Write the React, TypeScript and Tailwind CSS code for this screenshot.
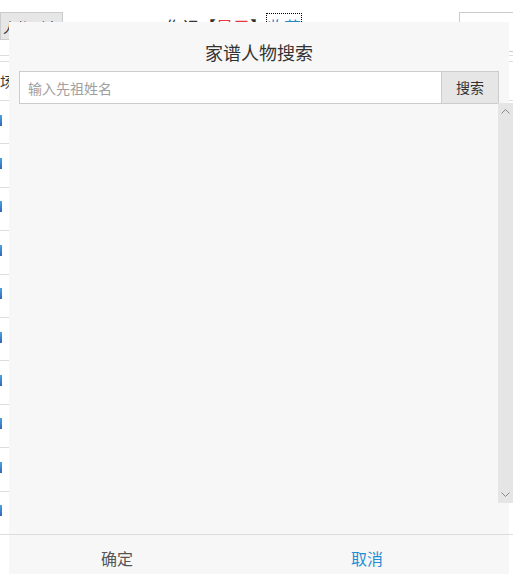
import React from 'react';

const font = { fontFamily: '"Microsoft YaHei", "Noto Sans CJK SC", "Noto Sans", sans-serif' };

function BackgroundRows() {
  const rows = Array.from({ length: 10 });
  return (
    <div className="flex flex-col">
      {rows.map((_, i) => (
        <div key={i} className="h-[43.4px] border-b border-[#ddd] flex items-center">
          <div className="w-[2px] h-[11px] -mt-[4px] bg-gradient-to-b from-[#4ba3e3] to-[#3466b8]" />
        </div>
      ))}
    </div>
  );
}

function App() {
  return (
    <div className="relative w-full h-[574px] bg-white overflow-hidden text-[#333]" style={font}>
      {/* page behind the dialog */}
      <div className="h-[56px] border-b border-[#ddd] flex items-start pt-[12px]">
        <div className="w-[63px] h-[28px] bg-[#e6e6e6] border border-[#ccc] text-[14px] leading-[28px] pl-[2px]">人物列表</div>
        <div className="ml-[102px] mt-[5px] text-[17px] leading-[20px]">
          作记【<span className="text-[#e4393c]">显示</span>】<span className="outline-1 outline-dotted outline-black text-[#1e88c9]">收藏</span>
        </div>
        <div className="ml-auto w-[54px] h-[40px] border border-[#ccc] border-r-0" />
      </div>
      <div className="h-[6px] border-b border-[#ddd]" />
      <div className="h-[39px] border-b border-[#ddd] text-[14px] leading-[38px]">场</div>
      <BackgroundRows />

      {/* dialog */}
      <div className="absolute left-[9px] top-[22px] bottom-0 w-[500px] bg-[#f7f7f7] flex flex-col">
        <div className="pt-[18px] pb-[7px] text-center text-[18px] leading-[24px] text-[#333]">家谱人物搜索</div>
        <div className="mx-[10px] h-[33px] flex">
          <input
            placeholder="输入先祖姓名"
            className="flex-1 min-w-0 h-full bg-white border border-[#ccc] px-[8px] text-[14px] outline-none placeholder:text-[#a0a0a0]"
            style={font}
          />
          <button className="w-[57px] h-full bg-[#e6e6e6] border border-l-0 border-[#ccc] text-[14px] text-[#333]" style={font}>
            搜索
          </button>
        </div>
        <div className="relative flex-1">
          <div className="absolute right-[-4px] top-[-1px] w-[15px] h-[400px] bg-[#e5e5e5] flex flex-col items-center justify-between py-[6px]">
            <svg width="9" height="5" viewBox="0 0 9 5" fill="none" stroke="#888" strokeWidth="1">
              <path d="M0.5 4.5 L4.5 0.5 L8.5 4.5" />
            </svg>
            <svg width="9" height="5" viewBox="0 0 9 5" fill="none" stroke="#888" strokeWidth="1">
              <path d="M0.5 0.5 L4.5 4.5 L8.5 0.5" />
            </svg>
          </div>
        </div>
        <div className="h-[40px] border-t border-[#ddd] flex items-start text-[16px] leading-[20px]">
          <button className="flex-1 pt-[13px] pr-[34px] text-[#555]" style={font}>确定</button>
          <button className="flex-1 pt-[13px] pr-[34px] text-[#1f8fd6]" style={font}>取消</button>
        </div>
      </div>
    </div>
  );
}

export default App;
